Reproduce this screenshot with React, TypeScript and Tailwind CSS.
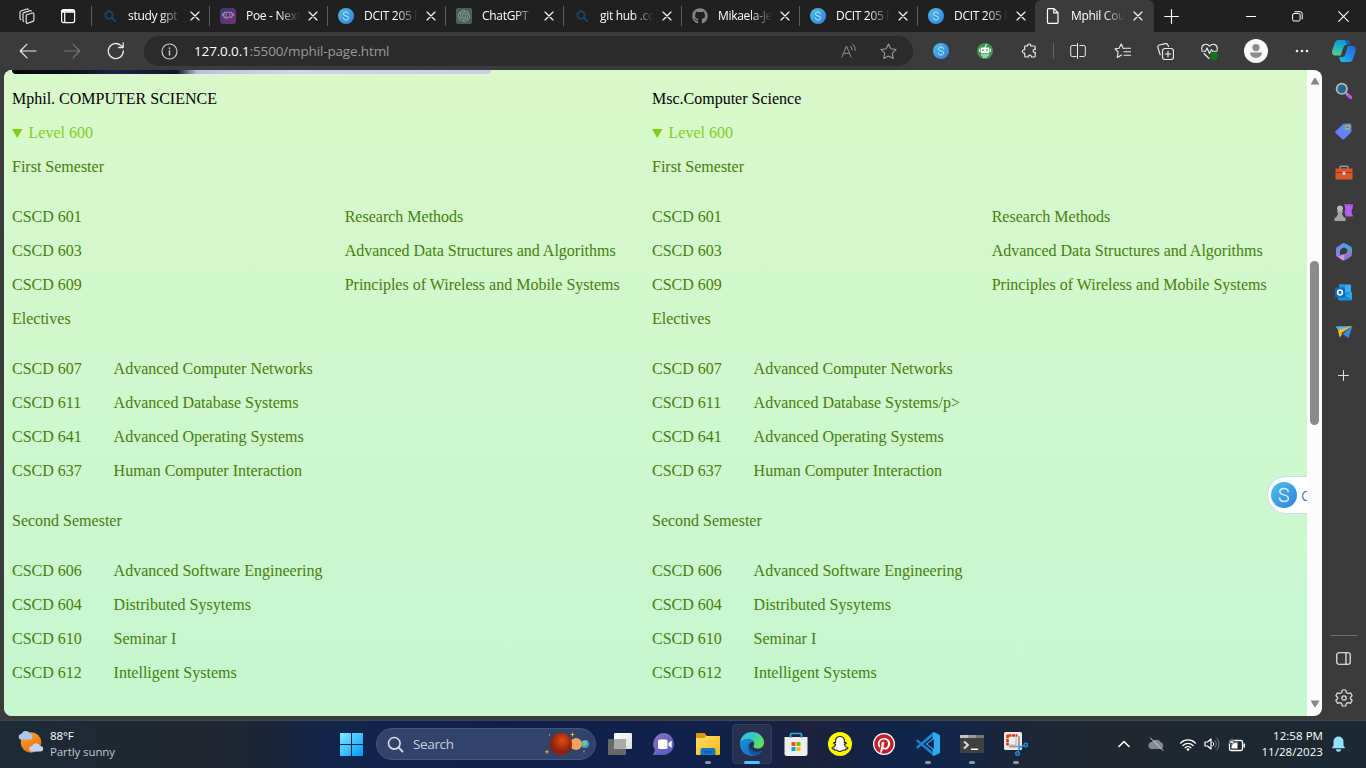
import type { ReactNode } from "react";
import { FaGithub, FaPinterest, FaSnapchatGhost } from "react-icons/fa";
import { SiOpenai } from "react-icons/si";

type P = { children: ReactNode; w?: number; h?: number; box?: string; className?: string };

function Svg({ children, w = 16, h = 16, box = "0 0 16 16", className = "" }: P) {
  return (
    <svg width={w} height={h} viewBox={box} fill="none" stroke="currentColor" strokeWidth="1" strokeLinecap="round" strokeLinejoin="round" className={"shrink-0 " + className}>
      {children}
    </svg>
  );
}

function SiderIcon({ size = 16 }: { size?: number }) {
  return (
    <svg width={size} height={size} viewBox="0 0 16 16" className="shrink-0">
      <defs>
        <linearGradient id="sider" x1="0" y1="0" x2="1" y2="1">
          <stop offset="0" stopColor="#4cc0e8" />
          <stop offset="1" stopColor="#337fe0" />
        </linearGradient>
      </defs>
      <circle cx="8" cy="8" r="8" fill="url(#sider)" />
      <path d="M10.6 5.9C10.4 4.7 9.4 4 8 4C6.500 4 5.400 4.800 5.400 6C5.400 8.500 10.700 7.300 10.700 10C10.700 11.200 9.600 12 8.100 12C6.500 12 5.400 11.200 5.300 9.900" fill="none" stroke="#d8effb" strokeWidth="0.9" strokeLinecap="round" />
    </svg>
  );
}

const SearchFav = () => (
  <Svg className="text-[#17466f]"><circle cx="7" cy="7" r="3.700" strokeWidth="1.700" /><path d="M9.800 9.800L13 13" strokeWidth="1.900" /></Svg>
);
const PoeFav = () => (
  <Svg>
    <defs><linearGradient id="poe" x1="0" y1="0" x2="1" y2="1"><stop offset="0" stopColor="#333d7d" /><stop offset="1" stopColor="#7a3270" /></linearGradient></defs>
    <rect width="16" height="16" rx="3.500" fill="url(#poe)" stroke="none" />
    <path d="M5 3.700h6a1.500 1.500 0 0 1 1.500 1.300 1.800 1.800 0 0 1 0 3.600A1.500 1.500 0 0 1 11 10H7.500L5.500 12V10A1.500 1.500 0 0 1 3.500 8.600a1.800 1.800 0 0 1 0-3.600A1.500 1.500 0 0 1 5 3.700Z" fill="#967ea4" stroke="none" />
    <rect x="4.300" y="5.200" width="7.400" height="3.300" rx="1.600" fill="#54306f" stroke="none" />
    <circle cx="6.300" cy="6.900" r=".7" fill="#b7a5c2" stroke="none" /><circle cx="9.700" cy="6.900" r=".7" fill="#b7a5c2" stroke="none" />
  </Svg>
);
const GptFav = () => (
  <span className="flex h-4 w-4 items-center justify-center rounded-[2px] bg-[#46635a] text-[#8fa09a]"><SiOpenai size={12} /></span>
);
const DocFav = () => (
  <Svg className="text-white"><path d="M3.500.700h5.500l4 4v9.500a1.200 1.200 0 0 1-1.200 1.200H3.700a1.200 1.200 0 0 1-1.200-1.200V1.900A1.200 1.200 0 0 1 3.500.700ZM8.800.700v4.200H13" strokeWidth="1.200" /></Svg>
);

const tabs: { icon: ReactNode; title: string }[] = [
  { icon: <SearchFav />, title: "study gpt" },
  { icon: <PoeFav />, title: "Poe - Next" },
  { icon: <SiderIcon />, title: "DCIT 205 l" },
  { icon: <GptFav />, title: "ChatGPT" },
  { icon: <SearchFav />, title: "git hub .co" },
  { icon: <FaGithub size={16} className="text-[#858585]" />, title: "Mikaela-Je" },
  { icon: <SiderIcon />, title: "DCIT 205 l" },
  { icon: <SiderIcon />, title: "DCIT 205 l" },
  { icon: <DocFav />, title: "Mphil Cour" },
];

function TabStrip() {
  return (
    <div className="flex h-8 shrink-0 bg-[#202020] text-white">
      <div className="flex w-[91px] shrink-0 items-center pl-[18px]">
        <Svg w={17} h={17} box="0 0 17 17" className="text-[#e8e8e8]">
          <path d="M8.500 6.800L14.600 5a1 1 0 0 1 1.300 1v6a1.500 1.500 0 0 1-1 1.400L9.600 15.300A1 1 0 0 1 8.200 14.400V7.200ZM5.800 13.500A1 1 0 0 1 5 12.500V6a1.500 1.500 0 0 1 1-1.400L12 2.600a1 1 0 0 1 1.300.5M2.800 11.700A1 1 0 0 1 2 10.700V4.400A1.500 1.500 0 0 1 3 3L8.800 1a1 1 0 0 1 1.300.5" strokeWidth="1.150" />
        </Svg>
        <Svg className="ml-[25px]"><rect x="1.600" y="1.600" width="13" height="13" rx="2" strokeWidth="1.200" /><path d="M1.500 4.200H14.500M4.700 5V14.500" strokeWidth="1.200" /><path d="M2 2.800h12" strokeWidth="1.800" /></Svg>
      </div>
      {tabs.map((t, i) => {
        const active = i === tabs.length - 1;
        return (
          <div key={i} className={"flex h-8 shrink-0 items-center " + (active ? "w-[119px] -mr-px rounded-t-md bg-[#3b3b3b] pl-[10px]" : "w-[118px]")}>
            {!active && <span className="mr-[10px] h-[20px] w-px shrink-0 bg-[#5c5c5c]" />}
            <span className="flex w-4 shrink-0 justify-center">{t.icon}</span>
            <span className="ml-[10px] w-[54px] shrink-0 overflow-hidden whitespace-nowrap pb-px text-[12px] tracking-[-0.3px] [mask-image:linear-gradient(to_right,black_60%,transparent_100%)]">{t.title}</span>
            <Svg w={10} h={10} box="0 0 10 10" className="ml-[8px]"><path d="M1 1L9 9M9 1L1 9" strokeWidth="1.100" /></Svg>
          </div>
        );
      })}
      <div className="flex w-[36px] shrink-0 items-center justify-center">
        <Svg w={15} h={15} box="0 0 15 15"><path d="M7.500 .700V14.300M.700 7.500H14.300" strokeWidth="1.200" /></Svg>
      </div>
      <div className="ml-auto flex">
        <div className="flex w-[46px] items-center justify-center"><Svg w={10} h={10} box="0 0 10 10"><path d="M0 5.500H10" /></Svg></div>
        <div className="flex w-[46px] items-center justify-center"><Svg w={11} h={11} box="0 0 11 11"><rect x=".6" y="2.500" width="7.500" height="7.500" rx="1.500" /><path d="M3 .700H8A2.200 2.200 0 0 1 10.200 3V8" /></Svg></div>
        <div className="flex w-[46px] items-center justify-center"><Svg w={11} h={11} box="0 0 11 11"><path d="M.700.700L10.300 10.300M10.300.700L.700 10.300" strokeWidth="1.100" /></Svg></div>
      </div>
    </div>
  );
}

function Cell({ children, className = "w-11" }: { children: ReactNode; className?: string }) {
  return <div className={"flex shrink-0 items-center justify-center " + className}>{children}</div>;
}

function Toolbar() {
  return (
    <div className="flex h-[38px] shrink-0 items-center bg-[#3b3b3b] pl-1.5 text-[#ececec]">
      <Cell><Svg w={18} h={16} box="0 0 18 16"><path d="M17 8H1.500M8 1.200L1.200 8L8 14.800" strokeWidth="1.200" /></Svg></Cell>
      <Cell><Svg w={18} h={16} box="0 0 18 16" className="text-[#747474]"><path d="M1 8H16.500M10 1.200L16.800 8L10 14.800" strokeWidth="1.200" /></Svg></Cell>
      <Cell><Svg w={18} h={18} box="0 0 18 18"><path d="M16.300 9A7.500 7.500 0 1 1 14 3.600L16 5.500M16.200 1V5.500H11.700" strokeWidth="1.300" /></Svg></Cell>
      <div className="ml-1.5 flex h-[30px] w-[769px] shrink-0 items-center rounded-full bg-[#2b2b2b] pl-[17px] pr-[16px]">
        <Svg w={17} h={17} box="0 0 17 17" className="text-[#c8c8c8]"><circle cx="8.500" cy="8.500" r="7.500" strokeWidth="1.200" /><path d="M8.500 7.800V12" strokeWidth="1.400" /><path d="M8.500 5.200v.100" strokeWidth="1.700" /></Svg>
        <span className="ml-[16px] whitespace-nowrap text-[13.500px] tracking-[-0.15px] text-[#9a9a9a]"><span className="text-white">127.0.0.1</span>:5500/mphil-page.html</span>
        <Svg className="ml-auto text-[#8e8e8e]"><path d="M1 14L5.500 3L10 14M2.600 10.300H8.500M9.700 3.300a4 4 0 0 1 1.200 3.600M12 1.200a7.500 7.500 0 0 1 2.200 6.400" /></Svg>
        <Svg className="ml-[23px] text-[#9a9a9a]" w={17} h={17}><path d="M8 .900L10.200 5.400L15.200 6.100L11.600 9.600L12.400 14.600L8 12.200L3.600 14.600L4.400 9.600L.800 6.100L5.800 5.400Z" /></Svg>
      </div>
      <Cell className="ml-1.5 w-11"><SiderIcon /></Cell>
      <Cell>
        <Svg><circle cx="8" cy="8" r="8" fill="#3d9950" stroke="none" /><path d="M7.800 4.500L9.500 1.200" stroke="white" /><rect x="3.800" y="4.500" width="8.400" height="5.800" rx=".6" fill="white" stroke="none" /><path d="M2.700 6v2.500M13.300 6v2.500M4.500 12h7M6 14h4" stroke="white" /><path d="M6 6.600v1M10 6.600v1" stroke="#3d9950" strokeWidth="1.300" /></Svg>
      </Cell>
      <Cell><Svg><path d="M4 3H6.700C6.100.300 10.300.300 9.700 3H13.200a1 1 0 0 1 1 1V6.500C11.400 5.600 11.400 10 14.200 9.300V13a1 1 0 0 1-1 1H10.300C10.700 11.500 6.900 11.500 7.300 14H4.700a1 1 0 0 1-1-1V10C.600 10.500.600 6.200 3.700 6.700V3.300Z" strokeWidth="1.150" /></Svg></Cell>
      <div className="ml-0.5 h-4 w-px bg-[#666]" />
      <Cell className="w-[47px]"><Svg><path d="M6.200 2.500H2.200a1.500 1.500 0 0 0-1.500 1.500v8a1.500 1.500 0 0 0 1.500 1.500H6.200M9.800 2.500h4a1.500 1.500 0 0 1 1.500 1.500v8a1.500 1.500 0 0 1-1.500 1.500H9.800M7.500 .500V15.500" /></Svg></Cell>
      <Cell className="w-[42px]"><Svg w={17}><path d="M9.200 5.500H8.800L6.700.900L4.600 5.200L.600 5.800L3.600 9L2.800 14.500L7 12M10 5.300H16M9.500 8.800H16M9.500 12.300H16" strokeWidth="1.100" /></Svg></Cell>
      <Cell><Svg w={17} h={17} box="0 0 17 17"><rect x="5.500" y="5.500" width="11" height="11" rx="2.500" strokeWidth="1.200" /><path d="M11 8.300V13.700M8.300 11H13.700M3.200 11.700L.900 4.600A2.200 2.200 0 0 1 2.300 2L8.500.700A2.200 2.200 0 0 1 11 2.300L11.500 3.500" strokeWidth="1.200" /></Svg></Cell>
      <Cell><Svg w={17} h={17} box="0 0 17 17"><path d="M1 7C-.5 1.500 5.500-.5 8.500 3.200C11.500-.5 17.500 1.500 16 7M.700 8.200H4.500L6 5L8.500 10.500L10.500 6.500L11.500 8.200H16M3 10.500L8 15.500" strokeWidth="1.150" /><circle cx="13" cy="13" r="3.700" fill="#0f7b18" stroke="none" /><path d="M11.400 13l1.100 1.100 2-2.200" stroke="#071" /></Svg></Cell>
      <Cell className="w-[49px]">
        <Svg w={24} h={24} box="0 0 24 24"><circle cx="12" cy="12" r="12" fill="#f7f7f7" stroke="none" /><circle cx="12" cy="8.600" r="3.600" fill="#8c8c8c" stroke="none" /><path d="M6 13.500h12c.2 3-2.500 5.300-6 5.300s-6.200-2.300-6-5.300Z" fill="#8c8c8c" stroke="none" /></Svg>
      </Cell>
      <Cell><Svg><circle cx="3" cy="8" r="1.300" fill="currentColor" stroke="none" /><circle cx="8" cy="8" r="1.300" fill="currentColor" stroke="none" /><circle cx="13" cy="8" r="1.300" fill="currentColor" stroke="none" /></Svg></Cell>
      <Cell className="w-[40px]">
        <Svg w={24} h={24} box="0 0 24 24">
          <defs>
            <linearGradient id="cp1" x1="0.300" y1="0" x2="0" y2="1"><stop offset="0" stopColor="#109ad8" /><stop offset=".5" stopColor="#25b9bb" /><stop offset="1" stopColor="#6ad17c" /></linearGradient>
            <linearGradient id="cp2" x1="1" y1="0" x2="0" y2="1"><stop offset="0" stopColor="#1e68d8" /><stop offset=".5" stopColor="#218be8" /><stop offset="1" stopColor="#19c7f2" /></linearGradient>
          </defs>
          <path d="M6 1h9.500c1.800 0 2 2 3 5h-4.300c-1.700 0-2.300 1-3 3l-2.500 7.500H3.500C0 16.500-.5 13.500.500 10.500L3 3.500C3.600 2 4.500 1 6 1Z" fill="url(#cp1)" stroke="none" />
          <path d="M17 7h3.500c3 0 4 2.500 3 5.500L21 20c-.7 2-1.800 3-3.500 3H10c-2 0-2-2.500-2.800-5h3c1.800 0 2.500-1 3.200-3L15.800 7Z" fill="url(#cp2)" stroke="none" />
          <path d="M12.500 1h3c1.800 0 2 2 3 5h-4c0-2-1-4.500-2-5Z" fill="#1748b0" stroke="none" opacity=".8" />
        </Svg>
      </Cell>
    </div>
  );
}

type Row = [string, string];
const firstSemester: Row[] = [
  ["CSCD 601", "Research Methods"],
  ["CSCD 603", "Advanced Data Structures and Algorithms"],
  ["CSCD 609", "Principles of Wireless and Mobile Systems"],
];
const electives = (dbTitle: string): Row[] => [
  ["CSCD 607", "Advanced Computer Networks"],
  ["CSCD 611", dbTitle],
  ["CSCD 641", "Advanced Operating Systems"],
  ["CSCD 637", "Human Computer Interaction"],
];
const secondSemester: Row[] = [
  ["CSCD 606", "Advanced Software Engineering"],
  ["CSCD 604", "Distributed Sysytems"],
  ["CSCD 610", "Seminar I"],
  ["CSCD 612", "Intelligent Systems"],
];

function Courses({ rows, codeWidth = "w-[101.600px]" }: { rows: Row[]; codeWidth?: string }) {
  return (
    <div className="flex flex-col gap-4">
      {rows.map(([code, name]) => (
        <div key={code} className="flex whitespace-nowrap">
          <span className={"shrink-0 " + codeWidth}>{code}</span>
          <span>{name}</span>
        </div>
      ))}
    </div>
  );
}

function Programme({ heading, dbTitle, wide }: { heading: string; dbTitle: string; wide: string }) {
  return (
    <section className="flex w-[640px] shrink-0 flex-col text-[#458009]">
      <h2 className="text-black">{heading}</h2>
      <div className="mt-4 flex items-center text-[#7fcf16]">
        <svg width="11" height="9" viewBox="0 0 11 9" className="mr-[5.500px]"><path d="M0 0H10.500L5.250 9Z" fill="currentColor" /></svg>
        Level 600
      </div>
      <p className="mb-8 mt-4">First Semester</p>
      <Courses rows={firstSemester} codeWidth={wide} />
      <p className="mb-8 mt-4">Electives</p>
      <Courses rows={electives(dbTitle)} />
      <p className="my-8">Second Semester</p>
      <Courses rows={secondSemester} />
    </section>
  );
}

function Page() {
  return (
    <div className="relative flex h-[646px] w-[1318px] shrink-0 overflow-hidden rounded-lg bg-[#fcfcfc]">
      <main className="w-[1303px] bg-linear-to-b from-[#d9f9cb] to-[#c7f6d0] pl-2 font-['Liberation_Serif',serif] text-base leading-[18px]">
        <div className="h-1 w-[479px] rounded-b-lg bg-[linear-gradient(to_right,#05070a_0,#0a0e1c_60px,#1d2348_100px,#10142c_165px,#b9bfe0_185px,#cdd3f0_280px,#c9cdea_100%)]" />
        <div className="flex pt-4">
          <Programme heading="Mphil. COMPUTER SCIENCE" dbTitle="Advanced Database Systems" wide="w-[332.700px]" />
          <Programme heading="Msc.Computer Science" dbTitle="Advanced Database Systems/p>" wide="w-[339.700px]" />
        </div>
      </main>
      <div className="flex w-[15px] flex-col items-center">
        <svg width="10" height="8" viewBox="0 0 10 8" className="mt-[7px]"><path d="M.5 7.500L4.300 1.300Q5 .300 5.700 1.300L9.500 7.500Z" fill="#868686" /></svg>
        <div className="mt-[176px] h-[164px] w-[9px] rounded-full bg-[#8b8b8b]" />
        <svg width="10" height="8" viewBox="0 0 10 8" className="mb-[8px] mt-auto"><path d="M.5 .500L4.300 6.700Q5 7.700 5.700 6.700L9.500 .500Z" fill="#868686" /></svg>
      </div>
      <div className="absolute right-[15px] top-[406px] flex h-[38px] w-10 items-center overflow-hidden rounded-l-full border border-r-0 border-[#c6dcf8] bg-white pl-[3px]">
        <SiderIcon size={26} />
        <span className="ml-[4px] text-[14px] text-[#3f7ad0]">C</span>
      </div>
    </div>
  );
}

function SideBar() {
  return (
    <aside className="flex w-[43px] shrink-0 flex-col items-center pt-px text-[#e0e0e0]">
      <Cell className="h-10"><Svg w={18} h={18} box="0 0 18 18"><path d="M12.500 12.500L15.700 15.500" stroke="#c84ff5" strokeWidth="3.200" /><path d="M10.700 10.700l1.500 1.500" stroke="#999" strokeWidth="2" /><circle cx="6.800" cy="6.800" r="5.200" fill="#246a90" stroke="#b9b9b9" strokeWidth="1.700" /></Svg></Cell>
      <Cell className="h-[41px]"><Svg w={17} h={17} box="0 0 17 17"><defs><linearGradient id="tag" x1="1" y1="0" x2="0" y2="1"><stop offset="0" stopColor="#5595fa" /><stop offset="1" stopColor="#6f74f6" /></linearGradient></defs><path d="M8.500 .800L14.500.500a2 2 0 0 1 2 2L16.300 9L9.300 16a1.500 1.500 0 0 1-2.200 0L.800 10.300a1.500 1.500 0 0 1 0-2.200Z" fill="url(#tag)" stroke="none" /><circle cx="12.500" cy="4.500" r="1.700" fill="#555" stroke="#e5c529" strokeWidth="1.200" /></Svg></Cell>
      <Cell className="h-10"><Svg w={18} h={15} box="0 0 18 15"><path d="M5 4V2.200a1 1 0 0 1 1-1h6a1 1 0 0 1 1 1V4" stroke="#9a9a9a" strokeWidth="1.500" /><rect x=".5" y="3.500" width="17" height="11" rx="1" fill="#dd572c" stroke="none" /><path d="M0 7.500H18" stroke="#9e3518" /><rect x="7.500" y="6.500" width="3" height="3.500" rx="1.500" fill="#ddd" stroke="none" /></Svg></Cell>
      <Cell className="h-10"><Svg w={19} h={18} box="0 0 19 18"><path d="M10.500 1h2.300v1.500h1V1h2.500v1.500h1V1H19l-.5 5-1 1 .4 4 1 1.500v1H12L10.500 9l.8-2.500Z" fill="#b85bf3" stroke="none" /><circle cx="6" cy="5.500" r="3" fill="#b9b9b9" stroke="none" /><path d="M3 8h6v1.300L8 9.500c0 3 1.500 3.500 2 5h1.500V18H.500v-3.500H2c.5-1.500 2-2 2-5L3 9.300Z" fill="#a5a5a5" stroke="none" /></Svg></Cell>
      <Cell className="h-10">
        <Svg w={18} h={18} box="0 0 18 18">
          <path d="M8.500.300Q6 1 4.500 2.500L2 4Q1 4.800 1 6.500V12Q1 13.500 2.500 13.800T5 12.700V8.500Q5 6.800 6.300 6L10.500 3.500Q11 1.200 8.500.300Z" fill="#7c86e8" stroke="none" />
          <path d="M7 .800Q9-.400 11.500 1L15.700 3.500Q17 4.300 17 6V10.500Q16 12.200 14.500 11.500T12.800 9.500V8Q12.800 6.500 11.500 5.800L8 3.800Q6 2.500 7 .800Z" fill="#4aa0e5" stroke="none" />
          <path d="M1.500 12.700Q3.300 13.700 5 12.700L11.500 9Q13 8 12.800 6.300 17 7.500 17 11.500 17 13 15.700 13.800L10.500 17Q9 17.900 7.500 17Z" fill="#8b79cc" stroke="none" />
          <path d="M1.500 12.900Q3.300 13.700 5 12.700L9.500 10.200 8.700 17.500Q8 17.400 7.300 17Z" fill="#c996e2" stroke="none" />
          <path d="M6 6.500L9 4.800 12 6.500V9.500L9 11.500 6 11Z" fill="#3b3b3b" stroke="none" />
        </Svg>
      </Cell>
      <Cell className="h-10"><Svg w={17} h={17} box="0 0 17 17"><rect x="4" y=".5" width="12" height="11" rx="1" fill="#38aeea" stroke="none" /><path d="M4 .500h6V6H4Z" fill="#2590dc" stroke="none" /><path d="M3 9L17 8v7.500a1 1 0 0 1-1 1H4a1 1 0 0 1-1-1Z" fill="#178fda" stroke="none" /><path d="M17 8L9 12l7.500 4.200a1 1 0 0 0 .5-.7Z" fill="#2ba8e8" stroke="none" /><path d="M9.500 12l6.800 4" stroke="#0f67b0" strokeWidth=".8" /><rect x="0" y="3.500" width="10" height="10" rx="1" fill="#0f6dbb" stroke="none" /><circle cx="5" cy="8.500" r="2.400" stroke="white" strokeWidth="1.500" /></Svg></Cell>
      <Cell className="h-10"><Svg w={18} h={14} box="0 0 18 14"><path d="M.500 1.500L17.500 1L4 6Z" fill="#4fb8f5" stroke="none" /><path d="M17.500 1L13.500 13L7.500 9Z" fill="#358cec" stroke="none" /><path d="M17.500 1L3 5L4.500 12.500L7 9.500L6.500 8Z" fill="#f8b923" stroke="none" /></Svg></Cell>
      <Cell className="mt-[3px] h-10"><Svg w={11} h={11} box="0 0 11 11"><path d="M5.500 .500V10.500M.500 5.500H10.500" /></Svg></Cell>
      <div className="mt-auto h-px w-7 bg-[#6c6c6c]" />
      <Cell className="mt-[2px] h-10"><Svg w={15} h={13} box="0 0 15 13" className="text-white"><rect x=".8" y=".8" width="13.400" height="11.400" rx="1.700" strokeWidth="1.100" /><path d="M10 1V12" strokeWidth="1.100" /></Svg></Cell>
      <Cell className="-mb-[2px] h-10"><Svg w={18} h={18} box="0 0 18 18"><path d="M7.300 1H10.700L11.300 3.500L13 4.500L15.500 3.800L17.200 6.700L15.400 8.500V9.700L17.200 11.400L15.500 14.300L13 13.600L11.300 14.600L10.700 17H7.300L6.700 14.600L5 13.600L2.500 14.300L.800 11.400L2.600 9.700V8.500L.800 6.700L2.500 3.800L5 4.500L6.700 3.500Z" strokeWidth="1.200" /><circle cx="9" cy="9" r="2.200" strokeWidth="1.200" /></Svg></Cell>
    </aside>
  );
}

function TaskIcon({ children, state = "" }: { children: ReactNode; state?: "" | "open" | "active" }) {
  return (
    <div className="flex h-full w-11 shrink-0 items-center justify-center">
      <div className={"relative flex h-10 w-10 items-center justify-center rounded " + (state === "active" ? "border border-[#323c5a] bg-[#27304f]" : "")}>
        {children}
        {state === "open" && <span className="absolute bottom-0 h-[3px] w-1.5 rounded-full bg-[#8f95a6]" />}
        {state === "active" && <span className="absolute -bottom-px h-[3px] w-4 rounded-full bg-[#4cc2ff]" />}
      </div>
    </div>
  );
}

function Taskbar() {
  return (
    <footer className="flex h-12 shrink-0 items-center border-t border-[#3d4450] bg-[linear-gradient(to_right,#1c2b37_0,#20272f_190px,#1d2636_250px,#12254b_330px,#10204b_500px,#10214a_720px,#1d223c_810px,#10234a_890px,#12264a_950px,#1c2637_1020px,#20272f_1120px,#1b2933_100%)] pb-px text-white">
      <div className="flex w-[329px] shrink-0 items-center pl-[18px]">
        <Svg w={26} h={24} box="0 0 26 24" className="-mt-1">
          <defs><linearGradient id="sun" x1="0" y1="0" x2=".6" y2="1"><stop offset="0" stopColor="#f5b02c" /><stop offset="1" stopColor="#ef6a14" /></linearGradient></defs>
          <circle cx="13" cy="12.500" r="10.300" fill="url(#sun)" stroke="none" />
          <path d="M3.500 9.500a2.800 2.800 0 0 1 0-5.600A4.500 4.500 0 0 1 12 4a2.800 2.800 0 0 1 .3 5.500Z" fill="#adc7f2" stroke="none" />
          <path d="M14 21.500a2.800 2.800 0 0 1 0-5.600 4.500 4.500 0 0 1 8.200 0 2.800 2.800 0 0 1 .3 5.600Z" fill="#c1d4f4" stroke="none" />
        </Svg>
        <div className="ml-[6px] whitespace-nowrap text-[11.500px] leading-4 tracking-[-0.1px]">
          <div className="font-medium">88°F</div>
          <div className="text-[#c1c6cc]">Partly sunny</div>
        </div>
      </div>
      <Cell>
        <Svg w={23} h={23} box="0 0 23 23"><defs><linearGradient id="win" x1="0" y1="0" x2="23" y2="23" gradientUnits="userSpaceOnUse"><stop offset="0" stopColor="#80eaff" /><stop offset="1" stopColor="#0098f8" /></linearGradient></defs><path d="M0 0h11v11H0ZM12 0h11v11H12ZM0 12h11v11H0ZM12 12h11v11H12Z" fill="url(#win)" stroke="none" /></Svg>
      </Cell>
      <div className="ml-[3px] flex h-8 w-[220px] shrink-0 items-center rounded-full border border-[#46557c] bg-[#31426b] pl-[10px] pr-[5px]">
        <Svg w={17} h={17} box="0 0 17 17" className="text-[#d8dfea]"><circle cx="7.300" cy="7.300" r="5.800" strokeWidth="1.600" /><path d="M11.700 11.700L15.500 15.500" strokeWidth="1.800" /></Svg>
        <span className="ml-[9px] text-[13.500px] tracking-[-0.35px] text-[#c8d0df]">Search</span>
        <Svg w={46} h={24} box="0 0 46 24" className="ml-auto">
          <defs><radialGradient id="mars" cx=".55" cy=".35"><stop offset="0" stopColor="#e14b15" /><stop offset="1" stopColor="#8b2108" /></radialGradient></defs>
          <circle cx="41" cy="12" r="4" fill="#37a5ce" stroke="none" /><path d="M38.500 10q2-2 5-.5-1 4-4 5Z" fill="#78c98a" stroke="none" />
          <circle cx="32" cy="12" r="6" fill="#f2a25f" stroke="none" />
          <circle cx="17" cy="12" r="11" fill="url(#mars)" stroke="none" />
          <path d="M3 18.300v3M1.500 19.800h3M28.500 1v3M27 2.500h3M5.500 2.500v.5M40 19v1" stroke="#e0b443" />
        </Svg>
      </div>
      <div className="ml-[2px] flex h-full items-center">
        <TaskIcon><Svg w={24} h={22} box="0 0 24 22"><defs><linearGradient id="tv" x1="0" y1="0" x2="1" y2="1"><stop offset="0" stopColor="#fff" /><stop offset="1" stopColor="#ddd" /></linearGradient></defs><rect x="0" y="6" width="18" height="16" rx="1" fill="#686868" stroke="none" /><rect x="6" y="0" width="18" height="16" rx="1" fill="url(#tv)" stroke="none" /><path d="M6 6h12v10H6Z" fill="#aaa" stroke="none" /></Svg></TaskIcon>
        <TaskIcon><Svg w={24} h={24} box="0 0 24 24"><defs><linearGradient id="chat" x1="0" y1="0" x2="1" y2="1"><stop offset="0" stopColor="#8c72b8" /><stop offset="1" stopColor="#5059c9" /></linearGradient></defs><path d="M12.500 1a11 11 0 1 1-3 21.800L1 23l2-5A11 11 0 0 1 12.500 1Z" fill="url(#chat)" stroke="none" /><rect x="6" y="7.500" width="9.500" height="9.500" rx="1.500" fill="#fff" stroke="none" /><path d="M16.500 11l3.200-2.500v7.500L16.500 13.500Z" fill="#fff" stroke="none" /></Svg></TaskIcon>
        <TaskIcon state="open"><Svg w={24} h={22} box="0 0 24 22"><defs><linearGradient id="folder" x1="0" y1="0" x2="1" y2="1"><stop offset="0" stopColor="#ffdc6b" /><stop offset="1" stopColor="#fbb90d" /></linearGradient></defs><path d="M0 1a1 1 0 0 1 1-1h7.500l2.500 3h12a1 1 0 0 1 1 1v5H0Z" fill="#d99a10" stroke="none" /><path d="M0 5h8l2-2h13a1 1 0 0 1 1 1v17a1 1 0 0 1-1 1H1a1 1 0 0 1-1-1Z" fill="url(#folder)" stroke="none" /><path d="M4.500 22v-5a2 2 0 0 1 2-2h11a2 2 0 0 1 2 2v5Z" fill="#1277c8" stroke="none" /><path d="M8.500 18.800h7" stroke="#0a4f92" strokeWidth="1.300" /></Svg></TaskIcon>
        <TaskIcon state="active">
          <Svg w={24} h={24} box="0 0 24 24">
            <defs>
              <linearGradient id="e1" x1="0" y1="0" x2="1" y2=".5"><stop offset="0" stopColor="#2fbef0" /><stop offset=".55" stopColor="#34c8c0" /><stop offset="1" stopColor="#62df5c" /></linearGradient>
              <linearGradient id="e2" x1="0" y1="0" x2="1" y2="1"><stop offset="0" stopColor="#1b92df" /><stop offset="1" stopColor="#1264ae" /></linearGradient>
            </defs>
            <path d="M0 11C.5 4.500 5.500 0 12 0c7 0 12 5 12 10.500 0 4-3 6-6.300 6-3 0-4.700-1.200-4.200-2.200C15.500 11 13 7.500 9 7.300 4.500 7.200 1.500 9 0 11Z" fill="url(#e1)" stroke="none" />
            <path d="M0 12C.500 9 4 7 8.500 7.200c3 .1 5.200 1.500 6 3.300C11 9 9 11.500 9 14c0 4 4 7 8.500 6.500 2-.2 3.500-1 4.800-1.800C20 22 16 24 12 24 5.500 24 0 19 0 12Z" fill="url(#e2)" stroke="none" />
            <path d="M9 12C7 16 9 22 14.500 23.700 18 23 20.500 21.500 22.500 18.500 15 22 9 18 9 12Z" fill="#1554a0" stroke="none" />
          </Svg>
        </TaskIcon>
        <TaskIcon><Svg w={24} h={24} box="0 0 24 24"><path d="M.500 5h23V21.500a2.500 2.500 0 0 1-2.500 2.500H3a2.500 2.500 0 0 1-2.500-2.500Z" fill="#eee" stroke="none" /><path d="M6.500 6V2.500A1 1 0 0 1 7.500 1.500h9A1 1 0 0 1 17.500 2.500V6" stroke="#2cabe8" strokeWidth="1.700" strokeLinecap="butt" /><path d="M7.500 10h4v4h-4Z" fill="#f25022" stroke="none" /><path d="M12.500 10h4v4h-4Z" fill="#7fba00" stroke="none" /><path d="M7.500 15h4v4h-4Z" fill="#00a4ef" stroke="none" /><path d="M12.500 15h4v4h-4Z" fill="#ffb900" stroke="none" /></Svg></TaskIcon>
        <TaskIcon><span className="flex h-6 w-6 items-center justify-center rounded-full bg-[#fffc00]"><FaSnapchatGhost size={16} color="white" stroke="#222" strokeWidth={35} className="overflow-visible" /></span></TaskIcon>
        <TaskIcon><span className="flex h-[22px] w-[22px] items-center justify-center rounded-full bg-white"><FaPinterest size={20} color="#c51f2b" /></span></TaskIcon>
        <TaskIcon state="open"><Svg w={24} h={24} box="0 0 24 24"><path d="M17 4L1.500 16.800 .300 15.700a.8.800 0 0 1 0-1L17 .200ZM17 4Z" fill="#178bd6" stroke="none" /><path d="M17 20L1.500 7.200 .300 8.300a.8.800 0 0 0 0 1L17 23.800Z" fill="#1681c9" stroke="none" /><path d="M17 .200Q17.500 0 18.200.200L23 2.500Q24 3 24 4V20Q24 21 23 21.500L18.200 23.800Q17.500 24 17 23.800L16.500 17.300 9.500 12 16.500 6.700Z" fill="#31a9f0" stroke="none" /><path d="M17.800 7.200V16.800L11.200 12Z" fill="#10234a" stroke="none" /></Svg></TaskIcon>
        <TaskIcon state="open"><Svg w={24} h={18} box="0 0 24 18"><rect width="24" height="18" rx="1" fill="#404040" stroke="none" /><path d="M0 3V1a1 1 0 0 1 1-1h22a1 1 0 0 1 1 1v2Z" fill="#777" stroke="none" /><path d="M0 3V1a1 1 0 0 1 1-1h7v3Z" fill="#c5c5c5" stroke="none" /><path d="M8 0h8v3H8Z" fill="#999" stroke="none" /><path d="M4 6.500L8 10L4 13.500" stroke="#ddd" strokeWidth="2" strokeLinecap="butt" /><path d="M11.500 14.300h6" stroke="#fff" strokeWidth="1.600" /></Svg></TaskIcon>
        <TaskIcon state="open"><Svg w={24} h={24} box="0 0 24 24"><rect x="0" y="0" width="18" height="18" rx="1.500" fill="#ececec" stroke="none" /><path d="M3.500 13.500V3.500H13.500" stroke="#d83b01" strokeWidth="2.600" strokeDasharray="3 .6" strokeLinecap="butt" /><path d="M12 6v5.500a1.500 1.500 0 0 1-1.500 1.500H6" stroke="#c8c8c8" strokeWidth="1.700" /><path d="M15 5v9.500M6 14.500h10" stroke="#9a9a9a" strokeWidth="1.900" /><circle cx="21.700" cy="13" r="1.700" stroke="#1a8ddd" strokeWidth="1.600" /><circle cx="13.500" cy="21.500" r="1.700" stroke="#1a8ddd" strokeWidth="1.600" /><path d="M14.200 19.500l1.500-4.300 4-1.500" stroke="#1a8ddd" strokeWidth="1.600" /></Svg></TaskIcon>
      </div>
      <div className="ml-auto flex items-center pr-[20px]">
        <Svg w={12} h={8} box="0 0 12 8"><path d="M1 6.500L6 1.500L11 6.500" strokeWidth="1.600" /></Svg>
        <Svg w={17} h={14} box="0 0 17 14" className="ml-[18px]"><path d="M4 12a3.500 3.500 0 0 1 0-7A5 5 0 0 1 12.500 5 3.700 3.700 0 0 1 13 12Z" fill="#858a90" stroke="none" /><path d="M2.500 1L15 13.500" stroke="#d5d8db" /></Svg>
        <Svg w={16} h={13} box="0 0 16 13" className="ml-[15px]"><path d="M.700 5A10.300 10.300 0 0 1 15.300 5M3 7.500a7 7 0 0 1 10 0M5.200 9.700a4 4 0 0 1 5.600 0" strokeWidth="1.300" /><circle cx="8" cy="11.500" r="1.300" fill="currentColor" stroke="none" /></Svg>
        <Svg w={16} h={14} box="0 0 16 14" className="ml-[8px]"><path d="M1 5h2.500L7 2v10L3.500 9H1Z" strokeWidth="1.200" /><path d="M9 5.200a2.600 2.600 0 0 1 0 3.600" /><path d="M11 3.500a5 5 0 0 1 0 7M13 1.500a8 8 0 0 1 0 11" stroke="#777e85" /></Svg>
        <Svg w={17} h={15} box="0 0 17 15" className="ml-[8px]"><rect x="1.500" y="3.500" width="13" height="10" rx="1.700" strokeWidth="1.300" /><path d="M16.200 7v3" strokeWidth="1.500" /><path d="M3.500 10V5.500h6v6H3.500Z" fill="white" stroke="none" /><path d="M4.300.300L.800 6h2.700L2.300 9.500 7 4H4Z" fill="white" stroke="#20272f" strokeWidth=".8" /></Svg>
        <div className="ml-[13px] flex w-[65px] flex-col items-end whitespace-nowrap text-[11.500px] leading-4 tracking-[0.050px]"><div>12:58 PM</div><div>11/28/2023</div></div>
        <Svg w={15} h={16} box="0 0 15 16" className="ml-[8px]"><path d="M7.500.500a5 5 0 0 1 5 5v4l1.700 2.700H.800L2.500 9.500v-4a5 5 0 0 1 5-5ZM5 13.200h5a2.500 2.500 0 0 1-5 0Z" fill="#93e3ff" stroke="none" /></Svg>
      </div>
    </footer>
  );
}

export default function App() {
  return (
    <div className="flex h-[768px] w-[1366px] flex-col overflow-hidden bg-[#3b3b3b] font-['Open_Sans','Noto_Sans',sans-serif]">
      <TabStrip />
      <Toolbar />
      <div className="flex h-[650px] shrink-0 pb-1 pl-1">
        <Page />
        <SideBar />
      </div>
      <Taskbar />
    </div>
  );
}
